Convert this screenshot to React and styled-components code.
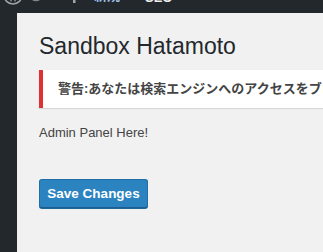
import React from 'react'
import styled, { createGlobalStyle } from 'styled-components'

const GlobalStyle = createGlobalStyle`
    html, body {
        margin: 0;
        padding: 0;
        background: #f1f1f1;
        overflow: hidden;
    }
    body {
        font-family: "Liberation Sans", Arial, "Noto Sans CJK JP", sans-serif;
        color: #444;
    }
`

const Page = styled.div`
    width: 323px;
    height: 252px;
    display: flex;
    flex-direction: column;
    overflow: hidden;
`

// the page is scrolled a little, so only the bottom of the admin bar shows
const AdminBar = styled.div`
    height: 32px;
    margin-top: -19px;
    flex-shrink: 0;
    background: #23282d;
    display: flex;
    align-items: center;
    padding-left: 3px;
    font-size: 13px;
    line-height: 32px;
    color: #eee;
`

const BarIcon = styled.span`
    display: flex;
    align-items: center;
    margin-left: ${props => props.offset || 0}px;
    margin-top: ${props => props.lift ? -props.lift : 0}px;
`

const BarLabel = styled.span`
    margin-left: ${props => props.offset || 0}px;
    margin-top: ${props => props.lift ? -props.lift : 0}px;
    color: ${props => props.color || '#eee'};
    font-weight: 600;
    font-family: "Liberation Sans", "Noto Sans CJK JP", sans-serif;
`

const Body = styled.div`
    flex: 1;
    display: flex;
`

const Sidebar = styled.div`
    width: 17px;
    flex-shrink: 0;
    background: #23282d;
`

const Content = styled.div`
    flex: 1;
    padding: 18px 0 0 22px;
    min-width: 0;
`

const Title = styled.h1`
    margin: 0;
    font-size: 23px;
    font-weight: 400;
    line-height: 30px;
    color: #23282d;
`

const Notice = styled.div`
    margin-top: 9px;
    background: #fff;
    border-left: 4px solid #dc3232;
    box-shadow: 0 1px 1px rgba(0, 0, 0, 0.1);
    padding: 9px 0 9px 15px;
    white-space: nowrap;
    overflow: hidden;
`

const NoticeText = styled.p`
    margin: 0;
    font-size: 13px;
    line-height: 20px;
    font-weight: 700;
    color: #444;
    font-family: "Liberation Sans", "Noto Sans CJK JP", sans-serif;
`

const Text = styled.p`
    margin: 15px 0 0;
    font-size: 13px;
    line-height: 20px;
    color: #444;
`

const SaveButton = styled.button`
    display: block;
    margin-top: 36px;
    height: 29px;
    width: 109px;
    padding: 0;
    white-space: nowrap;
    background: #2b83c0;
    border: 1px solid #1f6ea6;
    border-bottom-color: #1a5f8f;
    border-radius: 3px;
    box-shadow: 0 1px 0 #1c6796;
    color: #fff;
    font-family: "Liberation Sans", Arial, sans-serif;
    font-size: 13.5px;
    font-weight: 700;
    cursor: pointer;
`

export default function App() {
    return (
        <Page>
            <GlobalStyle />
            <AdminBar>
                <BarIcon lift={5}>
                    <svg width="20" height="20" viewBox="0 0 20 20">
                        <circle cx="10" cy="10" r="9" fill="none" stroke="#a0a5aa" strokeWidth="1.5" />
                        <path d="M5 6 L8 15 L10 9 L12 15 L15 6" fill="none" stroke="#a0a5aa" strokeWidth="1.5" />
                    </svg>
                </BarIcon>
                <BarIcon offset={4} lift={6}>
                    <svg width="18" height="18" viewBox="0 0 20 20">
                        <path d="M10 3 a7 7 0 1 0 7 7" fill="none" stroke="#82878c" strokeWidth="2" />
                        <path d="M10 0 L14 3 L10 6 Z" fill="#82878c" />
                    </svg>
                </BarIcon>
                <BarIcon offset={22} lift={2}>
                    <svg width="14" height="14" viewBox="0 0 14 14">
                        <rect x="6" y="0" width="2.5" height="14" fill="#a0a5aa" />
                        <rect x="0" y="6" width="14" height="2.5" fill="#a0a5aa" />
                    </svg>
                </BarIcon>
                <BarLabel offset={13} lift={3} color="#9ec2e6">新規</BarLabel>
                <BarLabel offset={25} lift={-1}>SEO</BarLabel>
            </AdminBar>
            <Body>
                <Sidebar />
                <Content>
                    <Title>Sandbox Hatamoto</Title>
                    <Notice>
                        <NoticeText>警告:あなたは検索エンジンへのアクセスをブロックしています。</NoticeText>
                    </Notice>
                    <Text>Admin Panel Here!</Text>
                    <SaveButton>Save Changes</SaveButton>
                </Content>
            </Body>
        </Page>
    )
}
